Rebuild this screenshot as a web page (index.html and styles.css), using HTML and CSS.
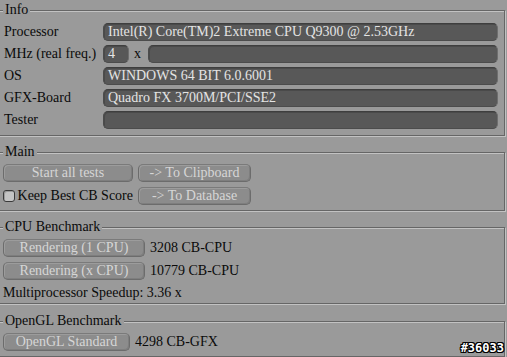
FILE: index.html
```html
<!DOCTYPE html>
<html lang="en">
<head>
    <meta charset="UTF-8">
    <meta name="viewport" content="width=device-width, initial-scale=1.0">
    <title>CINEBENCH</title>
    <link rel="stylesheet" href="styles.css">
</head>
<body>
    <div class="group group-info">
        <span class="group-title">Info</span>
        <div class="info-row">
            <span class="label">Processor</span>
            <div class="field">Intel(R) Core(TM)2 Extreme CPU Q9300 @ 2.53GHz</div>
        </div>
        <div class="info-row">
            <span class="label">MHz (real freq.)</span>
            <div class="mhz">
                <div class="field field-small">4</div>
                <span class="times">x</span>
                <div class="field field-grow"></div>
            </div>
        </div>
        <div class="info-row">
            <span class="label">OS</span>
            <div class="field">WINDOWS 64 BIT 6.0.6001</div>
        </div>
        <div class="info-row">
            <span class="label">GFX-Board</span>
            <div class="field">Quadro FX 3700M/PCI/SSE2</div>
        </div>
        <div class="info-row">
            <span class="label">Tester</span>
            <div class="field"></div>
        </div>
    </div>

    <div class="group group-main">
        <span class="group-title">Main</span>
        <div class="main-grid">
            <button class="button">Start all tests</button>
            <button class="button">-&gt; To Clipboard</button>
            <label class="check">
                <span class="check-box"></span>
                Keep Best CB Score
            </label>
            <button class="button">-&gt; To Database</button>
        </div>
    </div>

    <div class="group group-cpu">
        <span class="group-title">CPU Benchmark</span>
        <div class="bench-row">
            <button class="button button-cpu">Rendering (1 CPU)</button>
            <span class="result">3208 CB-CPU</span>
        </div>
        <div class="bench-row">
            <button class="button button-cpu">Rendering (x CPU)</button>
            <span class="result">10779 CB-CPU</span>
        </div>
        <div class="speedup">Multiprocessor Speedup: 3.36 x</div>
    </div>

    <div class="group group-gl">
        <span class="group-title">OpenGL Benchmark</span>
        <div class="bench-row">
            <button class="button button-gl">OpenGL Standard</button>
            <span class="result">4298 CB-GFX</span>
        </div>
    </div>

    <div class="stamp">#36033</div>
</body>
</html>
```

FILE: styles.css
```css
:root {
    --bg: #9a9a9a;
    --line-dark: #666666;
    --line-light: #c2c2c2;
    --field-bg: #585858;
    --field-text: #e4e4e4;
    --button-bg: #8c8c8c;
    --button-text: #d6d6d6;
}

* {
    margin: 0;
    padding: 0;
    box-sizing: border-box;
}

body {
    width: 507px;
    height: 357px;
    overflow: hidden;
    background: var(--bg);
    font-family: "Liberation Serif", "Times New Roman", serif;
    font-size: 14px;
    line-height: 16px;
    color: #0a0a0a;
    position: relative;
}

/* etched group boxes */
.group {
    position: relative;
    margin: 16px 2px 0 -2px;
    border: 1px solid var(--line-dark);
    box-shadow: inset 1px 1px 0 var(--line-light), 1px 1px 0 var(--line-light);
    padding: 11px 6px 5px 5px;
}

.group-title {
    position: absolute;
    top: -9px;
    left: 4px;
    padding: 0 2px;
    background: var(--bg);
}

.group-info {
    margin-top: 10px;
    padding-top: 12px;
    padding-bottom: 6px;
}

.group-cpu {
    padding-bottom: 2px;
}

.group-gl {
    margin-top: 17px;
}

/* info rows */
.info-row {
    display: grid;
    grid-template-columns: 99px 1fr;
    align-items: center;
    height: 18px;
    margin-bottom: 4px;
}

.info-row:last-child {
    margin-bottom: 0;
}

.label {
    white-space: nowrap;
}

.field {
    height: 18px;
    line-height: 16px;
    padding-left: 4px;
    background: var(--field-bg);
    color: var(--field-text);
    border: 1px solid #4c4c4c;
    border-top-color: #3e3e3e;
    border-right-color: #6e6e6e;
    border-radius: 5px;
    box-shadow: inset 1px 1px 0 #4a4a4a;
    white-space: nowrap;
    overflow: hidden;
}

.mhz {
    display: flex;
    align-items: center;
}

.field-small {
    width: 26px;
    flex: none;
}

.times {
    margin: 0 7px 0 5px;
}

.field-grow {
    flex: 1;
}

/* buttons */
.button {
    height: 18px;
    font: inherit;
    line-height: 16px;
    color: var(--button-text);
    background: var(--button-bg);
    border: 1px solid #6c6c6c;
    border-top-color: #7a7a7a;
    border-radius: 5px;
    box-shadow: inset 1px 1px 0 #9c9c9c, inset -1px -1px 0 #7e7e7e;
    text-align: center;
    white-space: nowrap;
}

.main-grid {
    display: grid;
    grid-template-columns: 130px 113px;
    column-gap: 5px;
    row-gap: 5px;
    margin-left: -1px;
}

.check {
    display: flex;
    align-items: center;
    gap: 3px;
    white-space: nowrap;
}

.check-box {
    width: 13px;
    height: 12px;
    border: 1px solid #3a3a3a;
    border-radius: 3px;
    background: #c4c4c4;
    box-shadow: inset 1px 1px 0 #9a9a9a;
}

.bench-row {
    display: flex;
    align-items: center;
    margin-left: -1px;
    margin-bottom: 5px;
}

.group-gl .bench-row {
    margin-bottom: 0;
}

.button-cpu {
    width: 142px;
}

.button-gl {
    width: 127px;
}

.result {
    margin-left: 5px;
    white-space: nowrap;
}

.speedup {
    margin-left: -1px;
}

/* overlay id stamp */
.stamp {
    position: absolute;
    right: 3px;
    bottom: 3px;
    font-family: "DejaVu Sans Mono", monospace;
    font-weight: bold;
    font-size: 12px;
    line-height: 12px;
    color: #ffffff;
    text-shadow: 1px 0 0 #000, -1px 0 0 #000, 0 1px 0 #000, 0 -1px 0 #000,
        1px 1px 0 #000, -1px -1px 0 #000, 1px -1px 0 #000, -1px 1px 0 #000;
}
```
